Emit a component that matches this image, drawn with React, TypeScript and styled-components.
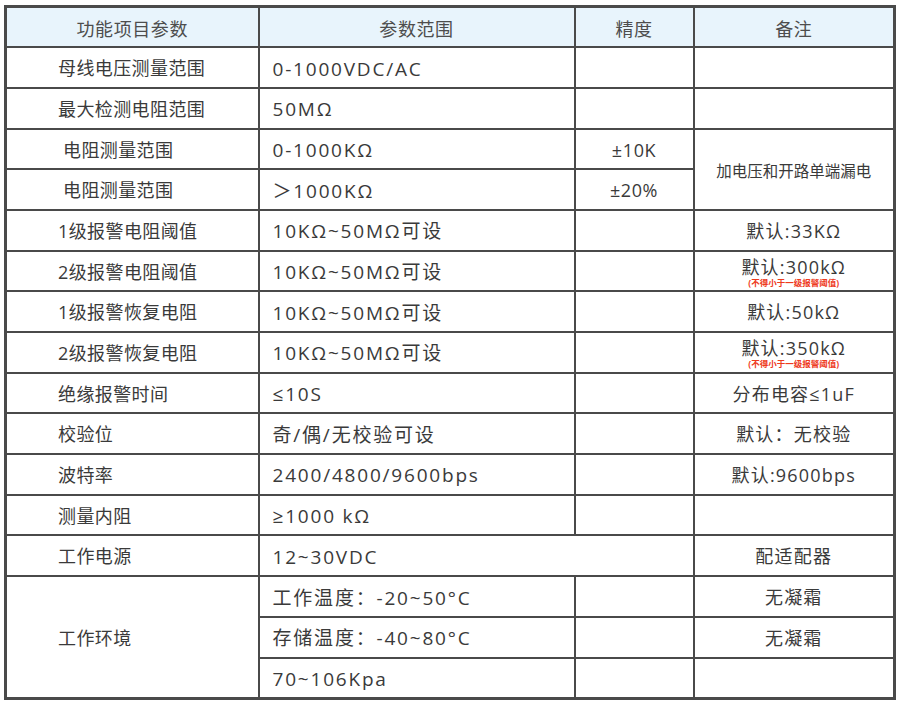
import styled, { createGlobalStyle } from "styled-components";

const Global = createGlobalStyle`
    body {
        margin: 0;
        background: #ffffff;
        font-family: "Open Sans", "Noto Sans CJK SC", sans-serif;
        color: #3a3a3a;
    }
`;

const Page = styled.div`
    padding: 5px 0 0 4px;
`;

const Table = styled.table`
    width: 889px;
    border-collapse: collapse;
    table-layout: fixed;
    border: 3px solid #4a4a4a;
`;

const Row = styled.tr`
    height: 40.7px;
`;

const HeadCell = styled.th`
    background: #e8f4fc;
    border: 2px solid #4a4a4a;
    color: #4d4d4d;
    font-weight: 400;
    font-size: 18px;
    letter-spacing: 0.6px;
    text-align: center;
    padding: 2px 0 0;
`;

// one cell style per column: name, range, accuracy, remark
const Cell = styled.td<{ $kind: "name" | "range" | "acc" | "remark" }>`
    border: 2px solid #4a4a4a;
    vertical-align: middle;
    line-height: 1.1;
    padding: 3px 0 0;
    text-align: center;
    font-size: 18px;
    letter-spacing: 1.2px;

    ${(p) =>
        p.$kind === "name" &&
        `
        text-align: left;
        padding-left: 51px;
        letter-spacing: 0.4px;
    `}

    ${(p) =>
        p.$kind === "range" &&
        `
        text-align: left;
        padding-left: 13px;
        font-size: 19px;
        letter-spacing: 1.8px;
    `}

    ${(p) =>
        p.$kind === "acc" &&
        `
        letter-spacing: 0.6px;
    `}
`;

const Small = styled.span`
    font-size: 15.5px;
    letter-spacing: 0;
`;

const Main = styled.div`
    line-height: 1;
`;

const Note = styled.div`
    color: #ee3a1c;
    font-size: 8.5px;
    font-weight: 700;
    letter-spacing: 0;
    line-height: 1;
    margin-top: 3px;
`;

type Item = {
    name: string;
    range: string;
    remark?: string;
    note?: boolean;
};

const top: Item[] = [
    { name: "母线电压测量范围", range: "0-1000VDC/AC" },
    { name: "最大检测电阻范围", range: "50MΩ" },
];

const alarms: Item[] = [
    { name: "1级报警电阻阈值", range: "10KΩ~50MΩ可设", remark: "默认:33KΩ" },
    { name: "2级报警电阻阈值", range: "10KΩ~50MΩ可设", remark: "默认:300kΩ", note: true },
    { name: "1级报警恢复电阻", range: "10KΩ~50MΩ可设", remark: "默认:50kΩ" },
    { name: "2级报警恢复电阻", range: "10KΩ~50MΩ可设", remark: "默认:350kΩ", note: true },
    { name: "绝缘报警时间", range: "≤10S", remark: "分布电容≤1uF" },
    { name: "校验位", range: "奇/偶/无校验可设", remark: "默认：无校验" },
    { name: "波特率", range: "2400/4800/9600bps", remark: "默认:9600bps" },
    { name: "测量内阻", range: "≥1000 kΩ" },
];

function Line({ name, range, remark, note }: Item) {
    return (
        <Row>
            <Cell $kind="name">{name}</Cell>
            <Cell $kind="range">{range}</Cell>
            <Cell $kind="acc" />
            {note ? (
                <Cell $kind="remark">
                    <Main>{remark}</Main>
                    <Note>(不得小于一级报警阈值)</Note>
                </Cell>
            ) : (
                <Cell $kind="remark">{remark}</Cell>
            )}
        </Row>
    );
}

export default function App() {
    return (
        <Page>
            <Global />
            <Table>
                <colgroup>
                    <col style={{ width: 253 }} />
                    <col style={{ width: 316 }} />
                    <col style={{ width: 119 }} />
                    <col style={{ width: 201 }} />
                </colgroup>
                <thead>
                    <Row>
                        <HeadCell>功能项目参数</HeadCell>
                        <HeadCell>参数范围</HeadCell>
                        <HeadCell>精度</HeadCell>
                        <HeadCell>备注</HeadCell>
                    </Row>
                </thead>
                <tbody>
                    {top.map((r) => (
                        <Line key={r.name} {...r} />
                    ))}
                    <Row>
                        <Cell $kind="name" style={{ paddingLeft: 56 }}>电阻测量范围</Cell>
                        <Cell $kind="range">0-1000KΩ</Cell>
                        <Cell $kind="acc">±10K</Cell>
                        <Cell $kind="remark" rowSpan={2}>
                            <Small>加电压和开路单端漏电</Small>
                        </Cell>
                    </Row>
                    <Row>
                        <Cell $kind="name" style={{ paddingLeft: 56 }}>电阻测量范围</Cell>
                        <Cell $kind="range">＞1000KΩ</Cell>
                        <Cell $kind="acc">±20%</Cell>
                    </Row>
                    {alarms.map((r) => (
                        <Line key={r.name} {...r} />
                    ))}
                    <Row>
                        <Cell $kind="name">工作电源</Cell>
                        <Cell $kind="range" colSpan={2}>12~30VDC</Cell>
                        <Cell $kind="remark">配适配器</Cell>
                    </Row>
                    <Row>
                        <Cell $kind="name" rowSpan={3}>工作环境</Cell>
                        <Cell $kind="range">工作温度：-20~50°C</Cell>
                        <Cell $kind="acc" />
                        <Cell $kind="remark">无凝霜</Cell>
                    </Row>
                    <Row>
                        <Cell $kind="range">存储温度：-40~80°C</Cell>
                        <Cell $kind="acc" />
                        <Cell $kind="remark">无凝霜</Cell>
                    </Row>
                    <Row>
                        <Cell $kind="range">70~106Kpa</Cell>
                        <Cell $kind="acc" />
                        <Cell $kind="remark" />
                    </Row>
                </tbody>
            </Table>
        </Page>
    );
}
